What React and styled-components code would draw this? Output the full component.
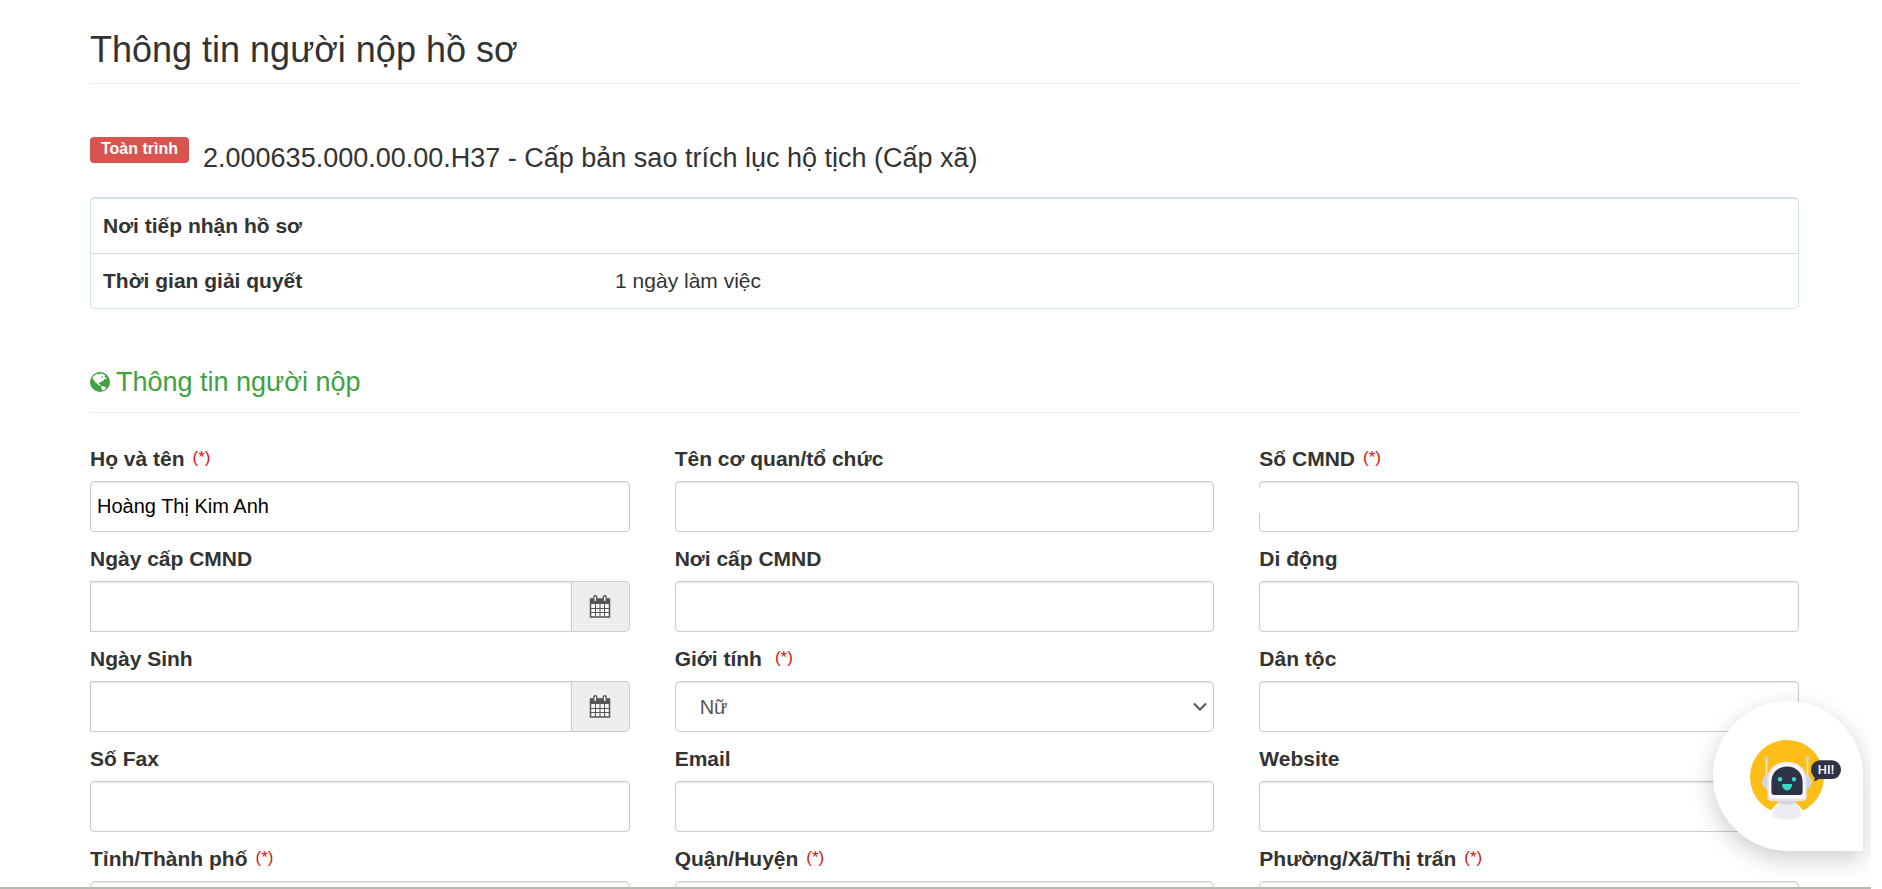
import styled, { createGlobalStyle } from "styled-components";

const colors = {
    text: "#333",
    control: "#555",
    border: "#ccc",
    line: "#eee",
    panel: "#cce3e8",
    danger: "#d9534f",
    required: "#e01010",
    green: "#3fa142",
};

const GlobalStyle = createGlobalStyle`
    * {
        box-sizing: border-box;
    }
    html, body, #root {
        height: 100%;
    }
    body {
        margin: 0;
        overflow: hidden;
        background: #fff;
        color: ${colors.text};
        font-family: "Liberation Sans", Arial, sans-serif;
        font-size: 21px;
    }
`;

const fields = [
    { id: "hoTen", label: "Họ và tên", required: true, value: "Hoàng Thị Kim Anh" },
    { id: "coQuan", label: "Tên cơ quan/tổ chức" },
    { id: "soCmnd", label: "Số CMND", required: true, type: "masked" },

    { id: "ngayCap", label: "Ngày cấp CMND", type: "date" },
    { id: "noiCap", label: "Nơi cấp CMND" },
    { id: "diDong", label: "Di động" },

    { id: "ngaySinh", label: "Ngày Sinh", type: "date" },
    { id: "gioiTinh", label: "Giới tính", required: true, type: "select", options: ["Nữ", "Nam"], wide: true },
    { id: "danToc", label: "Dân tộc" },

    { id: "soFax", label: "Số Fax" },
    { id: "email", label: "Email" },
    { id: "website", label: "Website" },

    { id: "tinh", label: "Tỉnh/Thành phố", required: true, type: "select", options: [""] },
    { id: "quan", label: "Quận/Huyện", required: true, type: "select", options: [""] },
    { id: "phuong", label: "Phường/Xã/Thị trấn", required: true, type: "select", options: [""] },
];

function GlobeIcon() {
    return (
        <Globe viewBox="0 0 20 20" aria-hidden="true">
            <circle cx="10" cy="10" r="10" fill={colors.green} />
            <path
                d="M3.6 4.2 L5.6 2.4 L8 1.8 L9.2 2.8 L10.6 1.6 L13 2 L15.4 3.4 L14.4 4.4 L16.6 6 L16.4 7.2 L14.4 7 L13.2 9 L11.4 9.6 L10.4 10.6 L9 10.6 L8.8 12 L10.2 12.4 L10.8 14 L9.2 13.6 L7.4 11.8 L5.6 10.8 L4.2 8.6 L3 7.4 L2.4 5.8 Z"
                fill="#fff"
            />
            <path d="M10.8 14.2 L13 14 L16.2 15.6 L15 17.4 L12.6 18.6 L11.8 17.2 Z" fill="#fff" />
            <path d="M11.8 4.2 L13.2 4.6 L12.4 5.8 L11.4 5.4 Z" fill={colors.green} />
        </Globe>
    );
}

function CalendarIcon() {
    return (
        <Calendar viewBox="0 0 22 23" aria-hidden="true">
            <path d="M1.5 4 H20.5 V22 H1.5 Z" fill="#f6f8fc" stroke="#555" strokeWidth="1.5" />
            <path d="M1 4 H21 V9 H1 Z" fill="#555" />
            <path d="M1 13.5 H21 M1 17.5 H21 M6.5 9 V22 M11 9 V22 M15.5 9 V22" stroke="#555" strokeWidth="1" />
            <rect x="4.75" y="0.75" width="3" height="6" rx="1.5" fill="#eee" stroke="#555" strokeWidth="1.3" />
            <rect x="14.25" y="0.75" width="3" height="6" rx="1.5" fill="#eee" stroke="#555" strokeWidth="1.3" />
        </Calendar>
    );
}

function Bot() {
    return (
        <BotDrawing viewBox="0 0 92 82" aria-hidden="true">
            <circle cx="37" cy="37" r="37" fill="#febd17" />
            {/* body */}
            <path d="M18 82 C19 71 25 61 37 61 C49 61 55 71 56 82 Z" fill="#fff" />
            <path d="M22.5 76 C24 67 28 62 37 62 C46 62 50 67 51.5 76 C45 81 29 81 22.5 76 Z" fill="#ecedf0" />
            <path d="M26 60 H48 C46 66 28 66 26 60 Z" fill="#d3d5da" />
            {/* antennas */}
            <path d="M16.5 20 V38 M57.5 20 V38" stroke="#f4ecd2" strokeWidth="1.6" />
            <circle cx="16.5" cy="18.7" r="2.4" fill="#d9cfae" />
            <circle cx="57.5" cy="18.7" r="2.4" fill="#d9cfae" />
            {/* head */}
            <ellipse cx="18" cy="42" rx="6" ry="7" fill="#d3d5da" />
            <ellipse cx="56" cy="42" rx="6" ry="7" fill="#d3d5da" />
            <path
                d="M37 21.7 C48 21.7 56.7 29 56.7 40 V57 C56.7 59.5 55 61 52.7 61 H21.3 C19 61 17.3 59.5 17.3 57 V40 C17.3 29 26 21.7 37 21.7 Z"
                fill="#e6e7eb"
            />
            <path
                d="M37 23 C47.5 23 55.2 30 55.2 40 V55 C55.2 57.3 54 58.6 52 58.6 H22 C20 58.6 18.8 57.3 18.8 55 V40 C18.8 30 26.5 23 37 23 Z"
                fill="#f7f7f9"
            />
            <path
                d="M37 26.5 C46 26.5 52.6 32.5 52.6 42 V52 C52.6 54 51.6 55 49.6 55 H24.4 C22.4 55 21.4 54 21.4 52 V42 C21.4 32.5 28 26.5 37 26.5 Z"
                fill="#2f3348"
            />
            <circle cx="30" cy="39.3" r="2.2" fill="#35dbc5" />
            <circle cx="44" cy="39.3" r="2.2" fill="#35dbc5" />
            <path d="M32.2 44 H42 C42 48 40 50.3 37.1 50.3 C34.2 50.3 32.2 48 32.2 44 Z" fill="#35dbc5" />
            {/* speech bubble */}
            <rect x="61" y="20.3" width="30" height="18.8" rx="9" fill="#2f3348" />
            <path d="M65 36 L64.2 41.6 L70 38.5 Z" fill="#2f3348" />
            <text x="76" y="34.4" textAnchor="middle" fontFamily="Roboto, sans-serif" fontSize="13" fontWeight="500" fill="#fff">
                HI!
            </text>
        </BotDrawing>
    );
}

function Control({ field }) {
    if (field.type === "date") {
        return (
            <InputGroup>
                <Input id={field.id} type="text" $grouped />
                <Addon type="button" aria-label={field.label}>
                    <CalendarIcon />
                </Addon>
            </InputGroup>
        );
    }
    if (field.type === "select") {
        return (
            <SelectBox>
                <Select id={field.id}>
                    {field.options.map((option) => (
                        <option key={option}>{option}</option>
                    ))}
                </Select>
                <Chevron viewBox="0 0 14 10" aria-hidden="true">
                    <path d="M1 1.5 L7 7.5 L13 1.5" />
                </Chevron>
            </SelectBox>
        );
    }
    if (field.type === "masked") {
        return (
            <Masked>
                <Input id={field.id} type="text" />
            </Masked>
        );
    }
    return <Input id={field.id} type="text" defaultValue={field.value} />;
}

function App() {
    return (
        <Page>
            <GlobalStyle />
            <Title>Thông tin người nộp hồ sơ</Title>

            <Procedure>
                <Badge>Toàn trình</Badge>
                <h2>2.000635.000.00.00.H37 - Cấp bản sao trích lục hộ tịch (Cấp xã)</h2>
            </Procedure>

            <Panel>
                <table>
                    <tbody>
                        <tr>
                            <th scope="row">Nơi tiếp nhận hồ sơ</th>
                            <td></td>
                        </tr>
                        <tr>
                            <th scope="row">Thời gian giải quyết</th>
                            <td>1 ngày làm việc</td>
                        </tr>
                    </tbody>
                </table>
            </Panel>

            <SectionTitle>
                <GlobeIcon />
                Thông tin người nộp
            </SectionTitle>

            <Form>
                {fields.map((field) => (
                    <Field key={field.id}>
                        <Label htmlFor={field.id} $wide={field.wide}>
                            {field.label}
                            {field.required && <span>(*)</span>}
                        </Label>
                        <Control field={field} />
                    </Field>
                ))}
            </Form>

            <ChatButton type="button" aria-label="Chat">
                <Bot />
            </ChatButton>
            <BottomEdge />
        </Page>
    );
}

const Page = styled.main`
    position: relative;
    height: 100%;
    margin-right: 11px;
    overflow: hidden;
    padding: 26px 72px 0 90px;
`;

const Title = styled.h1`
    margin: 0 0 53px;
    padding-bottom: 9px;
    border-bottom: 1px solid ${colors.line};
    font-size: 36px;
    font-weight: 400;
    line-height: 48px;
`;

const Procedure = styled.div`
    display: flex;
    align-items: flex-start;
    gap: 14px;
    margin-bottom: 18px;

    h2 {
        margin: 0;
        font-size: 27px;
        font-weight: 400;
        line-height: 42px;
    }
`;

const Badge = styled.span`
    padding: 0 11px 2px;
    border-radius: 4px;
    background: ${colors.danger};
    color: #fff;
    font-size: 16px;
    font-weight: 700;
    line-height: 24px;
`;

const Panel = styled.div`
    margin-bottom: 51px;
    border: 1px solid ${colors.panel};
    border-top-width: 2px;
    border-radius: 5px;

    table {
        width: 100%;
        border-collapse: collapse;
        table-layout: fixed;
    }
    th,
    td {
        height: 54px;
        padding: 0 12px;
        text-align: left;
        font-weight: 400;
    }
    th {
        width: 30%;
        font-weight: 700;
    }
    tr + tr {
        border-top: 1px solid #d5dddf;
    }
    tr + tr td {
        height: 55px;
    }
`;

const SectionTitle = styled.h2`
    display: flex;
    align-items: center;
    gap: 6px;
    margin: 0 0 32px;
    padding-bottom: 8px;
    border-bottom: 1px solid ${colors.line};
    color: ${colors.green};
    font-size: 27px;
    font-weight: 400;
    line-height: 44px;
`;

const Globe = styled.svg`
    width: 20px;
    height: 20px;
`;

const Form = styled.form`
    display: grid;
    grid-template-columns: repeat(3, 1fr);
    column-gap: 45px;
    row-gap: 13px;
`;

const Field = styled.div`
    min-width: 0;
`;

const Label = styled.label`
    display: block;
    height: 36px;
    font-weight: 700;
    line-height: 28px;

    span {
        margin-left: ${(props) => (props.$wide ? "13px" : "8px")};
        color: ${colors.required};
        font-size: 17px;
        font-weight: 400;
        line-height: 1;
        vertical-align: 3px;
    }
`;

const Input = styled.input`
    display: block;
    width: 100%;
    height: 51px;
    padding: 0 6px;
    border: 1px solid ${colors.border};
    border-radius: ${(props) => (props.$grouped ? "0" : "4px")};
    background: #fff;
    box-shadow: inset 0 1px 2px rgba(0, 0, 0, 0.1);
    color: #000;
    font-family: inherit;
    font-size: 20px;
    outline: none;
`;

const InputGroup = styled.div`
    display: flex;
`;

const Addon = styled.button`
    display: flex;
    align-items: center;
    justify-content: center;
    flex: 0 0 58px;
    padding: 0;
    border: 1px solid ${colors.border};
    border-left: 0;
    border-radius: 0 5px 5px 0;
    background: #eee;
`;

const Calendar = styled.svg`
    width: 22px;
    height: 23px;
`;

const SelectBox = styled.div`
    position: relative;
`;

const Select = styled.select`
    appearance: none;
    display: block;
    width: 100%;
    height: 51px;
    padding: 0 24px;
    border: 1px solid ${colors.border};
    border-radius: 5px;
    background: #fff;
    box-shadow: inset 0 1px 2px rgba(0, 0, 0, 0.1);
    color: ${colors.control};
    font-family: inherit;
    font-size: 20px;
    outline: none;
`;

const Chevron = styled.svg`
    position: absolute;
    top: 21px;
    right: 7px;
    width: 14px;
    height: 10px;
    fill: none;
    stroke: #555;
    stroke-width: 2;
    pointer-events: none;
`;

// hides part of the left border
const Masked = styled.div`
    position: relative;

    &::before {
        content: "";
        position: absolute;
        top: 7px;
        left: 0;
        width: 2px;
        height: 25px;
        background: #fff;
    }
`;

const ChatButton = styled.button`
    position: absolute;
    right: 8px;
    bottom: 38px;
    display: flex;
    align-items: flex-start;
    width: 150px;
    height: 150px;
    padding: 39px 0 0 37px;
    border: 0;
    border-radius: 50% 50% 0 50%;
    background: #fff;
    box-shadow: 0 8px 24px rgba(0, 0, 0, 0.2);
`;

const BotDrawing = styled.svg`
    flex: none;
    width: 92px;
    height: 82px;
`;

const BottomEdge = styled.div`
    position: absolute;
    right: 0;
    bottom: 0;
    left: 0;
    height: 2px;
    background: #b6b8b3;
`;

export default App;
